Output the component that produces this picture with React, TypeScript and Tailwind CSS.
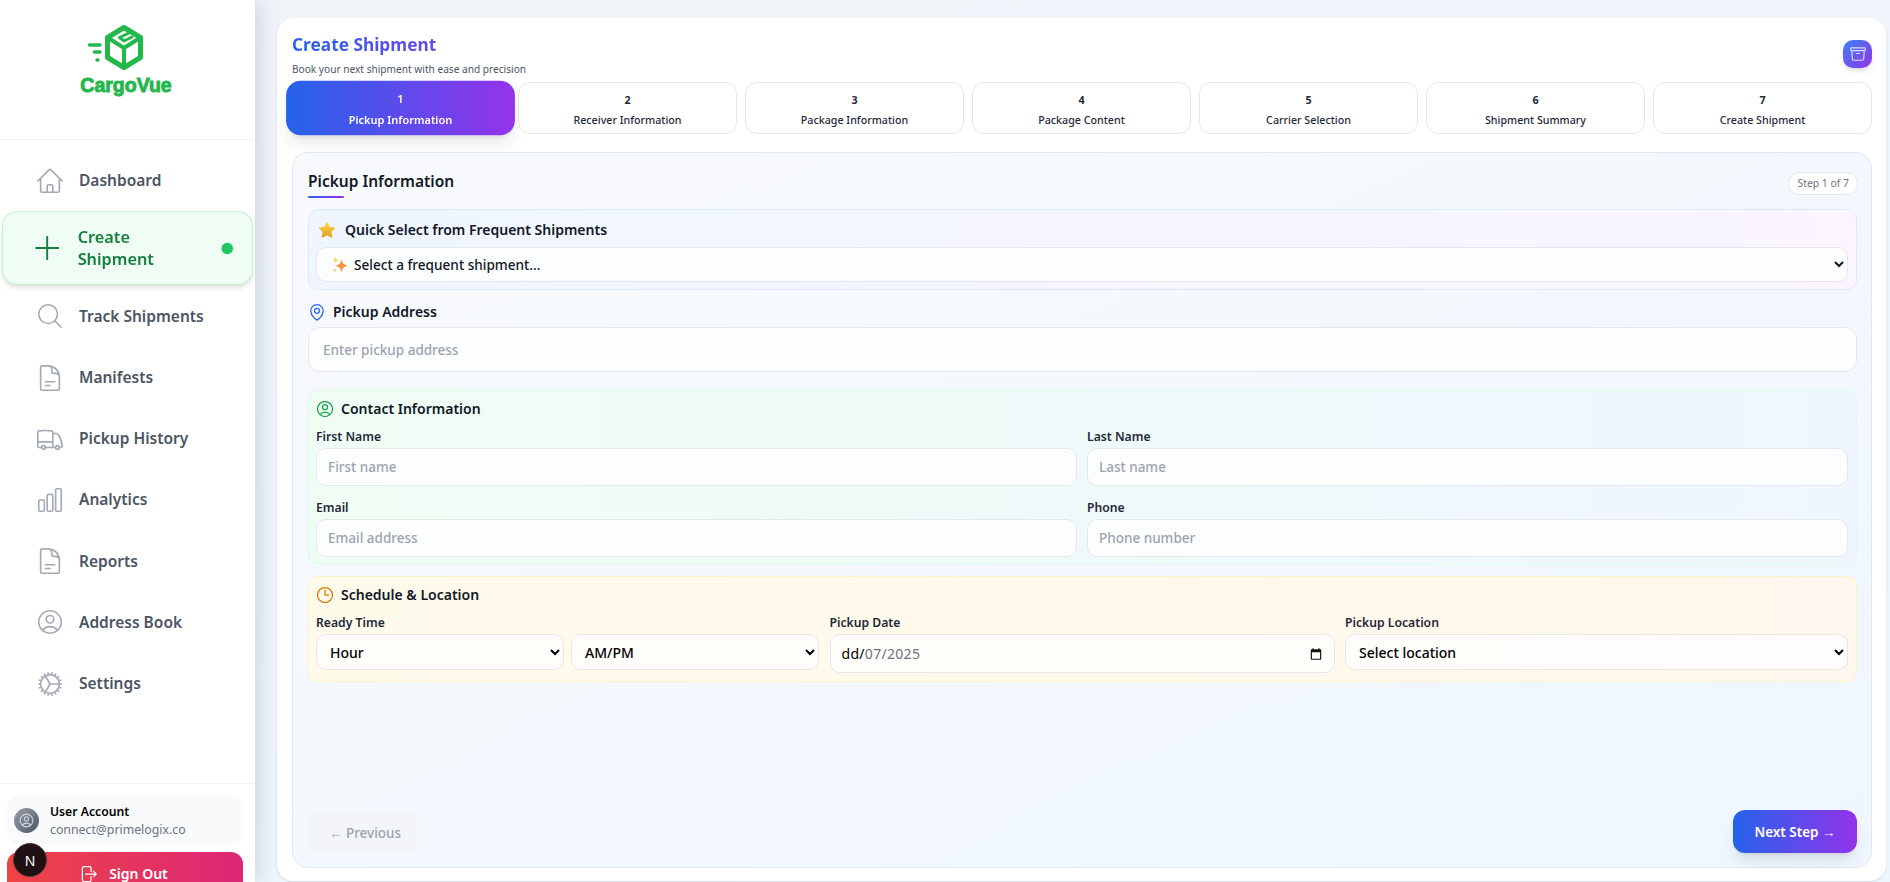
import {
  HiOutlineArchiveBox,
  HiOutlineArrowRightStartOnRectangle,
  HiOutlineChartBar,
  HiOutlineClock,
  HiOutlineCog,
  HiOutlineDocumentText,
  HiOutlineHome,
  HiOutlineMagnifyingGlass,
  HiOutlineMapPin,
  HiOutlinePlus,
  HiOutlineTruck,
  HiOutlineUserCircle,
} from 'react-icons/hi2';
import type { ComponentType, ReactNode } from 'react';

const navItems: { label: string; icon: ComponentType<{ className?: string }>; active?: boolean }[] = [
  { label: 'Dashboard', icon: HiOutlineHome },
  { label: 'Create Shipment', icon: HiOutlinePlus, active: true },
  { label: 'Track Shipments', icon: HiOutlineMagnifyingGlass },
  { label: 'Manifests', icon: HiOutlineDocumentText },
  { label: 'Pickup History', icon: HiOutlineTruck },
  { label: 'Analytics', icon: HiOutlineChartBar },
  { label: 'Reports', icon: HiOutlineDocumentText },
  { label: 'Address Book', icon: HiOutlineUserCircle },
  { label: 'Settings', icon: HiOutlineCog },
];

const steps = [
  'Pickup Information',
  'Receiver Information',
  'Package Information',
  'Package Content',
  'Carrier Selection',
  'Shipment Summary',
  'Create Shipment',
];

function Logo() {
  return (
    <div className="flex flex-col">
      <svg className="ml-[86px]" width="60" height="49" viewBox="0 0 60 49" fill="none" stroke="#22b84c" strokeLinejoin="round" strokeLinecap="round">
        <path d="M38 3.500 54.500 13.500v20L38 43.500 21.500 33.500v-20Z" strokeWidth="5" />
        <path d="M21.500 13.500 38 24 54.500 13.500M38 24v19.500" strokeWidth="4" />
        <path d="M44 8.500 33.500 13.500 38 17 46 13" strokeWidth="3" />
        <path d="M3.500 21H14M8.500 28H14" strokeWidth="3.500" />
        <path d="M11 36h1" strokeWidth="3.500" />
      </svg>
      <span className="w-[252px] text-center text-[19.5px] leading-[24px] font-bold text-[#22b84c] font-['Liberation_Sans',sans-serif] [-webkit-text-stroke:0.9px_#22b84c]">CargoVue</span>
    </div>
  );
}

function Sidebar() {
  return (
    <aside className="w-[255px] h-full shrink-0 bg-white flex flex-col overflow-hidden shadow-[4px_0_20px_rgba(100,116,139,0.25)] z-10">
      <div className="h-[140px] shrink-0 border-b border-gray-100 pt-[24px]">
        <Logo />
      </div>
      <nav className="h-[643px] shrink-0 px-2 pt-[13px] flex flex-col gap-[5.2px]">
        {navItems.map(item => {
          const Icon = item.icon;
          if (item.active) {
            return (
              <div key={item.label} className="h-[70px] -mt-px shrink-0 flex items-center scale-105 pl-[25px] pr-[18px] bg-[#f0fdf4] border border-[#bbf7d0] rounded-[14px] shadow-md text-[#15803d]">
                <Icon className="w-[34px] h-[34px] shrink-0 [stroke-width:1.3]" />
                <span className="ml-[12px] flex-1 text-[15.5px] leading-[21px] font-semibold">Create<br />Shipment</span>
                <span className="w-[11px] h-[11px] bg-[#22c55e] rounded-full" />
              </div>
            );
          }
          return (
            <div key={item.label} className="h-[56px] shrink-0 flex items-center pl-[27px] text-[#4b5563]">
              <Icon className="w-[30px] h-[30px] shrink-0 text-[#a3a9b5] [stroke-width:1.3]" />
              <span className="ml-[14px] text-[15.5px] font-semibold">{item.label}</span>
            </div>
          );
        })}
      </nav>
      <div className="shrink-0 border-t border-gray-100 pl-[7px] pr-[12px] pt-3 flex flex-col gap-2">
        <div className="h-[48px] bg-[#f9fafb] rounded-xl flex items-center pl-[7px] gap-[11px]">
          <div className="w-[25px] h-[25px] rounded-full bg-gradient-to-br from-[#9ca3af] to-[#4b5563] flex items-center justify-center">
            <HiOutlineUserCircle className="w-[17px] h-[17px] text-[#d1d5db]" />
          </div>
          <div className="pt-px">
            <div className="text-[12.2px] leading-[18px] font-semibold text-black">User Account</div>
            <div className="text-[12.3px] leading-[18px] text-[#6b7280]">connect@primelogix.co</div>
          </div>
        </div>
        <div className="h-[44px] rounded-t-xl bg-linear-to-r/srgb from-[#ef4444] to-[#db2777] flex items-center justify-center gap-[11px] pr-[4px] text-white text-[14px] leading-[14px] font-semibold">
          <HiOutlineArrowRightStartOnRectangle className="w-[20px] h-[20px]" />
          Sign Out
        </div>
      </div>
    </aside>
  );
}

function Field({ label, placeholder }: { label: string; placeholder: string }) {
  return (
    <div className="flex flex-col gap-[2px]">
      <label className="mt-px text-[12.2px] leading-[18px] font-semibold text-[#1f2937]">{label}</label>
      <input placeholder={placeholder} className="h-[38px] px-[11px] bg-white/80 border border-gray-200 rounded-[10px] text-[13.5px] font-medium placeholder:text-[#9ca3af] outline-none" />
    </div>
  );
}

function NativeSelect({ children, className }: { children: ReactNode; className?: string }) {
  return (
    <select className={`h-[36px] pl-[9px] bg-white/80 border border-gray-200 rounded-[10px] text-[14px] font-medium text-black outline-none ${className ?? ''}`}>
      {children}
    </select>
  );
}

function Section({ className, icon, title, children }: { className: string; icon: ReactNode; title: string; children: ReactNode }) {
  return (
    <section className={`rounded-[10px] border pl-[7px] pr-[8px] ${className}`}>
      <div className="h-[36px] pb-px flex items-center gap-[6px] -ml-px">
        {icon}
        <h3 className="text-[14px] font-semibold text-[#111827]">{title}</h3>
      </div>
      {children}
    </section>
  );
}

export default function App() {
  return (
    <div className="h-[882px] w-full flex overflow-hidden bg-gradient-to-br from-[#f1f5f9] to-[#eff6ff] font-['Noto_Sans',sans-serif]">
      <Sidebar />
      <main className="flex-1 min-w-0 pl-[22px] pr-1 pt-[18px]">
        <div className="h-[863px] bg-white rounded-[16px] shadow-sm px-[14px] flex flex-col">
          <div className="h-[64px] shrink-0 flex items-start justify-between pt-[14px]">
            <div className="pl-px">
              <h1 className="text-[17.3px] leading-[26px] font-bold bg-clip-text text-transparent bg-linear-to-r/srgb from-[#2563eb] to-[#9333ea]">Create Shipment</h1>
              <p className="text-[10.15px] leading-[16px] mt-[3px] text-[#4b5563]">Book your next shipment with ease and precision</p>
            </div>
            <div className="mt-[8px] w-[29px] h-[28px] rounded-[10px] bg-linear-to-br/srgb from-[#3b82f6] to-[#9333ea] shadow-md flex items-center justify-center">
              <HiOutlineArchiveBox className="w-[18px] h-[18px] text-white/80" />
            </div>
          </div>

          <div className="grid grid-cols-7 gap-2 h-[52px] shrink-0">
            {steps.map((step, i) =>
              i === 0 ? (
                <div key={step} className="scale-[1.045] rounded-[14px] bg-linear-to-r/srgb from-[#2563eb] to-[#9333ea] shadow-lg text-white flex flex-col items-center justify-center pt-[2px] text-[10.5px] leading-[20px] font-semibold">
                  <span>{i + 1}</span>
                  <span>{step}</span>
                </div>
              ) : (
                <div key={step} className="rounded-[12px] bg-white border border-gray-200 flex flex-col items-center justify-center pt-[3px] text-[10.7px] leading-[20px] font-medium text-[#1f2937]">
                  <span className="font-bold">{i + 1}</span>
                  <span>{step}</span>
                </div>
              ),
            )}
          </div>

          <div className="mt-[18px] ml-px h-[716px] shrink-0 rounded-[16px] border border-[#e2e8f0] bg-gradient-to-br from-[#f8fafc] to-[#eff6ff] pl-[15px] pr-[14px] pt-[19px] flex flex-col">
            <div className="flex items-start justify-between h-[37px] shrink-0">
              <div>
                <h2 className="text-[15.5px] leading-[18px] font-semibold text-[#111827]">Pickup Information</h2>
                <div className="w-[36px] h-[2px] mt-[6px] bg-linear-to-r/srgb from-[#2563eb] to-[#9333ea] rounded" />
              </div>
              <span className="-mr-px h-[23px] px-[8px] rounded-full border border-gray-200 bg-white text-[10.4px] leading-[21px] text-[#6b7280]">Step 1 of 7</span>
            </div>

            <section className="h-[81px] shrink-0 rounded-[10px] border border-[#dbeafe] bg-gradient-to-r from-[#eff6ff] to-[#faf5ff] pl-[7px] pr-[8px]">
              <div className="h-[37px] flex items-center gap-[9px] pl-[2px] pt-[2px]">
                <svg width="18" height="18" viewBox="0 0 24 24">
                  <defs>
                    <linearGradient id="star" x1="0" y1="0" x2="0" y2="1">
                      <stop offset="0" stopColor="#fcd34d" />
                      <stop offset="1" stopColor="#e0a31a" />
                    </linearGradient>
                  </defs>
                  <path d="M12 2.500l2.900 6.300 6.800.8-5 4.700 1.300 6.700L12 17.700l-6 3.300 1.300-6.700-5-4.700 6.800-.8z" fill="url(#star)" stroke="url(#star)" strokeWidth="2" strokeLinejoin="round" />
                </svg>
                <h3 className="text-[14px] font-semibold text-[#111827]">Quick Select from Frequent Shipments</h3>
              </div>
              <div className="relative">
                <select className="w-full h-[35px] pl-[33px] bg-white/80 border border-gray-200 rounded-[10px] text-[13.6px] font-medium text-[#111827] outline-none">
                  <option>Select a frequent shipment...</option>
                </select>
                <svg className="absolute left-[15px] top-[9px]" width="18" height="18" viewBox="0 0 24 24">
                  <path d="M14 4c1 6 3 8 9 9-6 1-8 3-9 9-1-6-3-8-9-9 6-1 8-3 9-9z" fill="#fb923c" />
                  <path d="M6 1c.5 3 1.500 4 4.500 4.500C7.500 6 6.500 7 6 10 5.500 7 4.500 6 1.500 5.500 4.500 5 5.500 4 6 1z" fill="#fcd34d" />
                  <path d="M5 16c.3 2 1 2.700 3 3-2 .3-2.700 1-3 3-.3-2-1-2.700-3-3 2-.3 2.700-1 3-3z" fill="#fdba74" />
                </svg>
              </div>
            </section>

            <div className="h-[37px] shrink-0 flex items-center gap-[6px] -ml-px pt-[6px]">
              <HiOutlineMapPin className="w-[20px] h-[20px] text-[#2563eb]" />
              <h3 className="text-[14px] font-semibold text-[#111827]">Pickup Address</h3>
            </div>
            <input placeholder="Enter pickup address" className="h-[45px] shrink-0 px-[14px] bg-white/80 border border-gray-200 rounded-[12px] text-[13.5px] font-medium placeholder:text-[#9ca3af] outline-none" />

            <Section className="mt-[18px] h-[174px] shrink-0 border-[#dcfce7] bg-gradient-to-r from-[#f0fdf4] to-[#eff6ff]" icon={<HiOutlineUserCircle className="w-[20px] h-[20px] text-[#16a34a]" />} title="Contact Information">
              <div className="grid grid-cols-2 gap-x-[10px] gap-y-[12px]">
                <Field label="First Name" placeholder="First name" />
                <Field label="Last Name" placeholder="Last name" />
                <Field label="Email" placeholder="Email address" />
                <Field label="Phone" placeholder="Phone number" />
              </div>
            </Section>

            <Section className="mt-[12px] h-[106px] shrink-0 border-[#fef3c7] bg-gradient-to-r from-[#fffbeb] to-[#fff7ed]" icon={<HiOutlineClock className="w-[20px] h-[20px] text-[#d97706]" />} title="Schedule & Location">
              <div className="grid grid-cols-[503px_505px_503px] gap-[10.5px]">
                <div className="flex flex-col gap-[2px]">
                  <label className="mt-px text-[12.2px] leading-[18px] font-semibold text-[#1f2937]">Ready Time</label>
                  <div className="grid grid-cols-2 gap-[7px]">
                    <NativeSelect><option>Hour</option></NativeSelect>
                    <NativeSelect><option>AM/PM</option></NativeSelect>
                  </div>
                </div>
                <div className="flex flex-col gap-[2px]">
                  <label className="mt-px text-[12.2px] leading-[18px] font-semibold text-[#1f2937]">Pickup Date</label>
                  <div className="h-[39px] bg-white/80 border border-gray-200 rounded-[10px] text-[14px] px-[11px] flex items-center justify-between">
                    <span className="tracking-[0.3px]">dd/<span className="text-[#6b7280]">07/2025</span></span>
                    <svg width="14" height="14" viewBox="0 0 24 24"><path d="M19 4h-1V2h-2v2H8V2H6v2H5a2 2 0 0 0-2 2v14a2 2 0 0 0 2 2h14a2 2 0 0 0 2-2V6a2 2 0 0 0-2-2zm0 16H5V9h14z" fill="#111" /></svg>
                  </div>
                </div>
                <div className="flex flex-col gap-[2px]">
                  <label className="mt-px text-[12.2px] leading-[18px] font-semibold text-[#1f2937]">Pickup Location</label>
                  <NativeSelect><option>Select location</option></NativeSelect>
                </div>
              </div>
            </Section>

            <div className="mt-auto mb-[14px] flex items-end justify-between">
              <button className="h-[42px] w-[114px] pt-[3px] rounded-[12px] bg-[#f3f4f6]/70 text-[#9ca3af] text-[13.5px] font-medium">
                <span className="font-['Liberation_Sans',sans-serif]">←</span> Previous
              </button>
              <button className="h-[43px] w-[124px] pt-[3px] rounded-[12px] bg-linear-to-r/srgb from-[#2563eb] to-[#9333ea] shadow-lg text-white text-[13.5px] font-semibold">
                Next Step <span className="font-['Liberation_Sans',sans-serif]">→</span>
              </button>
            </div>
          </div>
        </div>
      </main>
      <div className="absolute left-[13px] top-[843px] z-20 w-[34px] h-[34px] rounded-full bg-[#1f1013] border border-[#4a3a3c] flex items-center justify-center text-white text-[14px]">N</div>
    </div>
  );
}
